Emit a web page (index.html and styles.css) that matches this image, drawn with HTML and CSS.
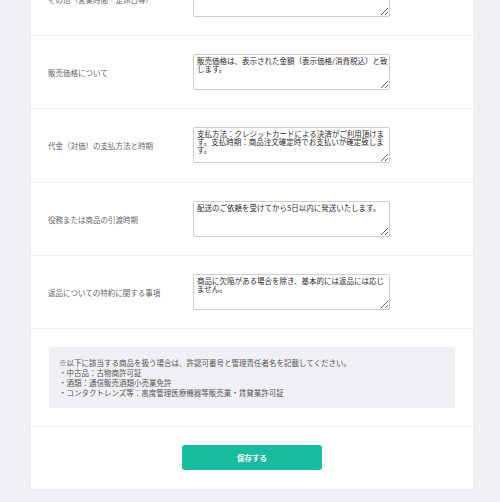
FILE: index.html
```html
<!DOCTYPE html>
<html lang="ja">
<head>
    <meta charset="UTF-8">
    <meta name="viewport" content="width=device-width, initial-scale=1.0">
    <title>特定商取引法に基づく表記</title>
    <link rel="stylesheet" href="styles.css">
</head>
<body>

    <div class="card">
        <div class="row">
            <label class="label">その他（営業時間・定休日等）</label>
            <textarea class="field"></textarea>
        </div>
        <div class="row">
            <label class="label">販売価格について</label>
            <textarea class="field">販売価格は、表示された金額（表示価格/消費税込）と致します。</textarea>
        </div>
        <div class="row">
            <label class="label">代金（対価）の支払方法と時期</label>
            <textarea class="field">支払方法：クレジットカードによる決済がご利用頂けます。支払時期：商品注文確定時でお支払いが確定致します。</textarea>
        </div>
        <div class="row">
            <label class="label">役務または商品の引渡時期</label>
            <textarea class="field">配送のご依頼を受けてから5日以内に発送いたします。</textarea>
        </div>
        <div class="row">
            <label class="label">返品についての特約に関する事項</label>
            <textarea class="field">商品に欠陥がある場合を除き、基本的には返品には応じません。</textarea>
        </div>

        <div class="note-row">
            <div class="note">
                <p>※以下に該当する商品を扱う場合は、許認可番号と管理責任者名を記載してください。</p>
                <p>・中古品：古物商許可証</p>
                <p>・酒類：通信販売酒類小売業免許</p>
                <p>・コンタクトレンズ等：高度管理医療機器等販売業・賃貸業許可証</p>
            </div>
        </div>

        <div class="actions">
            <button type="submit" class="btn">保存する</button>
        </div>
    </div>

</body>
</html>
```

FILE: styles.css
```css
*{
    margin: 0;
    padding: 0;
    box-sizing: border-box;
}
body{
    background-color: #eff0f4;
    font-family: "Noto Sans CJK JP", "Noto Sans", sans-serif;
    color: #555;
}
.card{
    width: 442px;
    margin: -37px 0 14px 31px;
    background-color: #fff;
    border-radius: 3px;
}
.row{
    display: flex;
    align-items: center;
    padding: 18px 17px;
    border-bottom: 1px solid #eef0f3;
}
.row:nth-child(3){
    padding-bottom: 19px;
}
.label{
    width: 145px;
    font-size: 7.5px;
    color: #666;
}
.field{
    width: 197px;
    height: 36px;
    padding: 2px 0 2px 3px;
    border: 1px solid #cfcfcf;
    border-radius: 2px;
    font-family: "Noto Sans CJK JP", sans-serif;
    font-size: 7.5px;
    line-height: 8px;
    color: #2b2b2b;
    outline: none;
    overflow: hidden;
}
.note-row{
    padding: 18px;
    border-bottom: 1px solid #eef0f3;
}
.note{
    background-color: #eef0f4;
    padding: 11px 10px 10px;
    font-size: 7.5px;
    line-height: 10px;
    color: #555;
}
.actions{
    display: flex;
    justify-content: center;
    padding: 18px 0 19px;
}
.btn{
    width: 140px;
    height: 25px;
    background-color: #1abc9f;
    border: none;
    outline: none;
    border-radius: 3px;
    cursor: pointer;
    font-family: "Noto Sans CJK JP", sans-serif;
    font-size: 7.5px;
    font-weight: 700;
    color: #fff;
}
```
